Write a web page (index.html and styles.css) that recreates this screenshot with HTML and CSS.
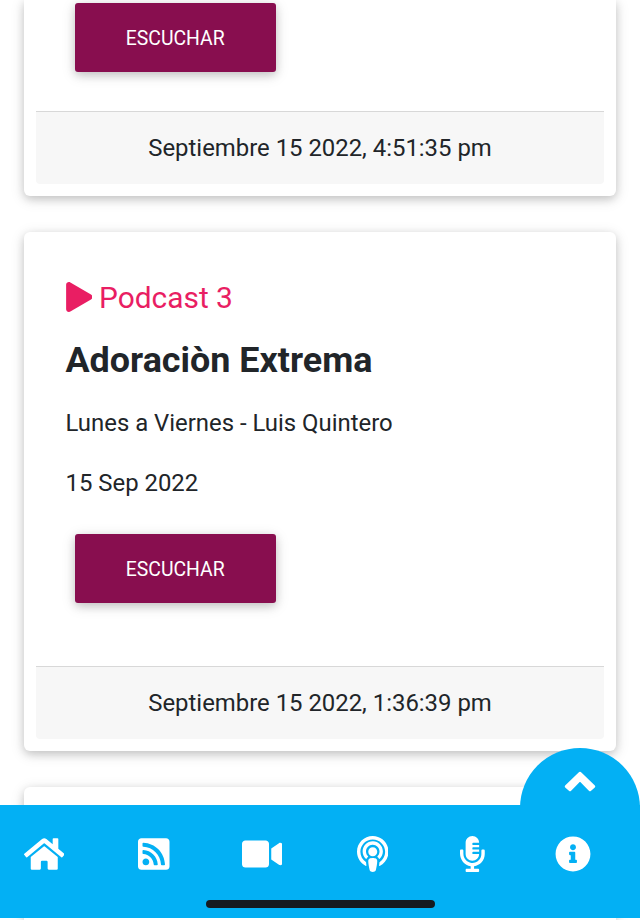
FILE: index.html
```html
<!DOCTYPE html>
<html lang="es">
<head>
    <meta charset="UTF-8">
    <meta name="viewport" content="width=device-width, initial-scale=1.0">
    <title>Podcast</title>
    <link rel="stylesheet" href="styles.css">
</head>
<body>
    <main class="podcasts">
        <article class="card card-first">
            <div class="card-body">
                <button class="btn-listen">Escuchar</button>
            </div>
            <div class="card-footer">Septiembre 15 2022, 4:51:35 pm</div>
        </article>

        <article class="card">
            <div class="card-body">
                <h5 class="card-label">
                    <svg class="icon-play" viewBox="0 0 448 512"><path d="M424.4 214.7L72.4 6.6C43.8-10.3 0 6.1 0 47.9V464c0 37.5 40.7 60.1 72.4 41.3l352-208c31.4-18.5 31.5-64.1 0-82.6z"/></svg>
                    <span>Podcast 3</span>
                </h5>
                <h4 class="card-title">Adoraciòn Extrema</h4>
                <p class="card-text">Lunes a Viernes - Luis Quintero</p>
                <p class="card-text">15 Sep 2022</p>
                <button class="btn-listen">Escuchar</button>
            </div>
            <div class="card-footer">Septiembre 15 2022, 1:36:39 pm</div>
        </article>

        <article class="card card-next"></article>
    </main>

    <nav class="navbar">
        <a class="go-up" href="#">
            <svg class="icon-up" viewBox="0 0 32 21" width="32" height="21"><path d="M16 2L30 15.5L26 19L16 8.8L6 19L2 15.5Z"/></svg>
        </a>
        <div class="nav-items">
            <a href="#"><svg viewBox="0 0 576 512"><path d="M280.37 148.26L96 300.11V464a16 16 0 0 0 16 16l112.06-.29a16 16 0 0 0 15.92-16V368a16 16 0 0 1 16-16h64a16 16 0 0 1 16 16v95.64a16 16 0 0 0 16 16.05L464 480a16 16 0 0 0 16-16V300L295.67 148.26a12.19 12.19 0 0 0-15.3 0zM571.6 251.47L488 182.56V44.05a12 12 0 0 0-12-12h-56a12 12 0 0 0-12 12v72.61L318.47 43a48 48 0 0 0-61 0L4.34 251.47a12 12 0 0 0-1.6 16.9l25.5 31A12 12 0 0 0 45.15 301l235.22-193.74a12.19 12.19 0 0 1 15.3 0L530.9 301a12 12 0 0 0 16.9-1.6l25.5-31a12 12 0 0 0-1.7-16.93z"/></svg></a>
            <a href="#"><svg viewBox="0 0 448 512"><path d="M400 32H48C21.49 32 0 53.49 0 80v352c0 26.51 21.49 48 48 48h352c26.51 0 48-21.49 48-48V80c0-26.51-21.49-48-48-48zM112 416c-26.51 0-48-21.49-48-48s21.49-48 48-48 48 21.49 48 48-21.49 48-48 48zm157.533 0h-34.335c-6.011 0-11.051-4.636-11.442-10.634-5.214-80.05-69.243-143.92-149.123-149.123-5.997-.39-10.633-5.431-10.633-11.441v-34.335c0-6.535 5.468-11.777 11.994-11.425 110.546 5.974 198.997 94.536 204.964 204.964.352 6.526-4.89 11.994-11.425 11.994zm103.027 0h-34.334c-6.161 0-11.175-4.882-11.427-11.038-5.598-136.535-115.204-246.161-251.76-251.76C68.882 152.949 64 147.935 64 141.774V107.44c0-6.454 5.338-11.664 11.787-11.432 167.83 6.025 302.21 141.191 308.205 308.205.232 6.449-4.978 11.787-11.432 11.787z"/></svg></a>
            <a href="#"><svg viewBox="0 0 576 512"><path d="M336.2 64H47.8C21.4 64 0 85.4 0 111.8v288.4C0 426.6 21.4 448 47.8 448h288.4c26.4 0 47.8-21.4 47.8-47.8V111.8c0-26.4-21.4-47.8-47.8-47.8zm189.4 37.7L416 177.3v157.4l109.6 75.5c21.2 14.6 50.4-.3 50.4-25.8V127.5c0-25.4-29.1-40.4-50.4-25.8z"/></svg></a>
            <a href="#"><svg viewBox="0 0 448 512"><path d="M267.429 488.563C262.286 507.573 242.858 512 224 512c-18.857 0-38.286-4.427-43.428-23.437C172.927 460.134 160 388.898 160 355.75c0-35.156 31.142-43.75 64-43.75s64 8.594 64 43.75c0 32.949-12.871 104.179-20.571 132.813zM156.867 288.554c-18.693-18.308-29.958-44.173-28.784-72.599 2.054-49.724 42.395-89.956 92.124-91.881C274.862 121.958 320 165.807 320 220c0 26.827-11.064 51.116-28.866 68.552-2.675 2.62-2.401 6.986.628 9.187 9.312 6.765 16.461 15.343 21.234 25.363 1.741 3.654 6.497 4.66 9.449 1.891 28.826-27.043 46.553-65.783 45.511-108.565-1.855-76.206-63.595-138.208-139.793-140.369C146.869 73.753 80 139.215 80 220c0 41.361 17.532 78.7 45.55 104.989 2.953 2.771 7.711 1.77 9.453-1.887 4.774-10.021 11.923-18.598 21.235-25.363 3.029-2.2 3.304-6.566.629-9.185zM224 0C100.204 0 0 100.185 0 224c0 89.992 52.602 165.647 125.739 201.408 4.333 2.118 9.267-1.544 8.535-6.31-2.382-15.512-4.342-30.946-5.406-44.339-.146-1.836-1.149-3.486-2.678-4.512-47.4-31.806-78.564-86.016-78.187-147.347.592-96.237 79.29-174.648 175.529-174.899C320.793 47.747 400 126.797 400 224c0 61.932-32.158 116.49-80.65 147.867-.999 14.037-3.069 30.588-5.624 47.23-.732 4.767 4.203 8.429 8.535 6.31C395.227 389.727 448 314.187 448 224 448 100.205 347.815 0 224 0zm0 160c-35.346 0-64 28.654-64 64s28.654 64 64 64 64-28.654 64-64-28.654-64-64-64z"/></svg></a>
            <a href="#"><svg viewBox="0 0 352 512"><path d="M336 192h-16c-8.84 0-16 7.16-16 16v48c0 74.8-64.49 134.82-140.79 127.38C96.71 376.89 48 317.11 48 250.3V208c0-8.84-7.16-16-16-16H16c-8.84 0-16 7.16-16 16v40.16c0 89.64 63.97 169.55 152 181.69V464H96c-8.84 0-16 7.16-16 16v16c0 8.84 7.16 16 16 16h160c8.84 0 16-7.16 16-16v-16c0-8.84-7.16-16-16-16h-56v-33.77C285.71 418.47 352 344.9 352 256v-48c0-8.84-7.16-16-16-16zM176 352c53.02 0 96-42.98 96-96h-85.33c-5.89 0-10.67-3.58-10.67-8v-16c0-4.42 4.78-8 10.67-8H272v-32h-85.33c-5.89 0-10.67-3.58-10.67-8v-16c0-4.42 4.78-8 10.67-8H272v-32h-85.33c-5.89 0-10.67-3.58-10.67-8v-16c0-4.42 4.78-8 10.67-8H272c0-53.02-42.98-96-96-96S80 42.98 80 96v160c0 53.02 42.98 96 96 96z"/></svg></a>
            <a href="#"><svg viewBox="0 0 512 512"><path d="M256 8C119.043 8 8 119.083 8 256c0 136.997 111.043 248 248 248s248-111.003 248-248C504 119.083 392.957 8 256 8zm0 110c23.196 0 42 18.804 42 42s-18.804 42-42 42-42-18.804-42-42 18.804-42 42-42zm56 254c0 6.627-5.373 12-12 12h-88c-6.627 0-12-5.373-12-12v-24c0-6.627 5.373-12 12-12h12v-64h-12c-6.627 0-12-5.373-12-12v-24c0-6.627 5.373-12 12-12h64c6.627 0 12 5.373 12 12v100h12c6.627 0 12 5.373 12 12v24z"/></svg></a>
        </div>
        <div class="home-bar"></div>
    </nav>
</body>
</html>
```

FILE: styles.css
```css
* {
    box-sizing: border-box;
}

body {
    margin: 0;
    height: 920px;
    overflow: hidden;
    background-color: #fff;
    color: #212529;
    font-family: Roboto, sans-serif;
    font-size: 23.9px;
    line-height: 36px;
}

.podcasts {
    display: flex;
    flex-direction: column;
    gap: 36px;
    padding: 0 24px;
}

.card {
    display: flex;
    flex-direction: column;
    flex-shrink: 0;
    height: 519px;
    padding: 12px;
    background: #fff;
    border-radius: 6px;
    box-shadow: 0 3px 8px rgba(0, 0, 0, 0.16), 0 3px 15px rgba(0, 0, 0, 0.12);
}

.card-body {
    flex: 1;
    padding: 30px 29.5px;
}

.card-first {
    height: 196px;
    padding-top: 0;
    border-radius: 0 0 6px 6px;
}

.card-first .card-body {
    padding-top: 3px;
}

.card-first .btn-listen {
    margin-top: 0;
}

.card-next {
    height: 133px;
    border-radius: 6px 6px 0 0;
}

.card-label {
    display: flex;
    align-items: center;
    gap: 7px;
    margin: 6px 0 17px;
    color: #e91e63;
    font-size: 29.9px;
    font-weight: 400;
    line-height: 36px;
}

.icon-play {
    width: 26.5px;
    height: 30px;
    margin-bottom: 2px;
    fill: #e91e63;
}

.card-title {
    margin: 0 0 18px;
    font-size: 35.9px;
    font-weight: 700;
    line-height: 54px;
}

.card-text {
    margin: 0 0 24px;
}

.btn-listen {
    display: block;
    width: 201.5px;
    height: 69px;
    margin: 33px 9px 0;
    padding: 1px 0 0;
    border: none;
    border-radius: 3px;
    background-color: #880e4f;
    box-shadow: 0 3px 8px rgba(0, 0, 0, 0.16), 0 3px 15px rgba(0, 0, 0, 0.12);
    color: #fff;
    font-family: inherit;
    font-size: 19.4px;
    text-transform: uppercase;
    cursor: pointer;
}

.card-footer {
    height: 73px;
    padding-top: 18px;
    border-top: 1.5px solid #d8d8d8;
    border-radius: 0 0 4px 4px;
    background-color: #f7f7f7;
    text-align: center;
}

.navbar {
    position: fixed;
    left: 0;
    right: 0;
    bottom: 2px;
    height: 113px;
    background-color: #03b0f4;
}

.navbar svg {
    display: block;
    fill: #fff;
}

.nav-items {
    display: grid;
    grid-template-columns: 114.5px 103.4px 115px 103.2px 94.8px 1fr;
    padding: 31px 0 0 23.8px;
}

.nav-items svg {
    height: 36px;
}

/* round tab that sticks out of the bar */
.go-up {
    position: absolute;
    right: 0.5px;
    top: -57px;
    display: flex;
    justify-content: center;
    width: 119.5px;
    height: 60px;
    padding-top: 23px;
    border-radius: 60px 60px 0 0;
    background-color: #03b0f4;
}

.icon-up {
    stroke: #fff;
    stroke-width: 2.5;
    stroke-linejoin: round;
}

.home-bar {
    width: 229px;
    height: 8px;
    margin: 28px auto 0;
    border-radius: 4px;
    background-color: #151a20;
}
```
